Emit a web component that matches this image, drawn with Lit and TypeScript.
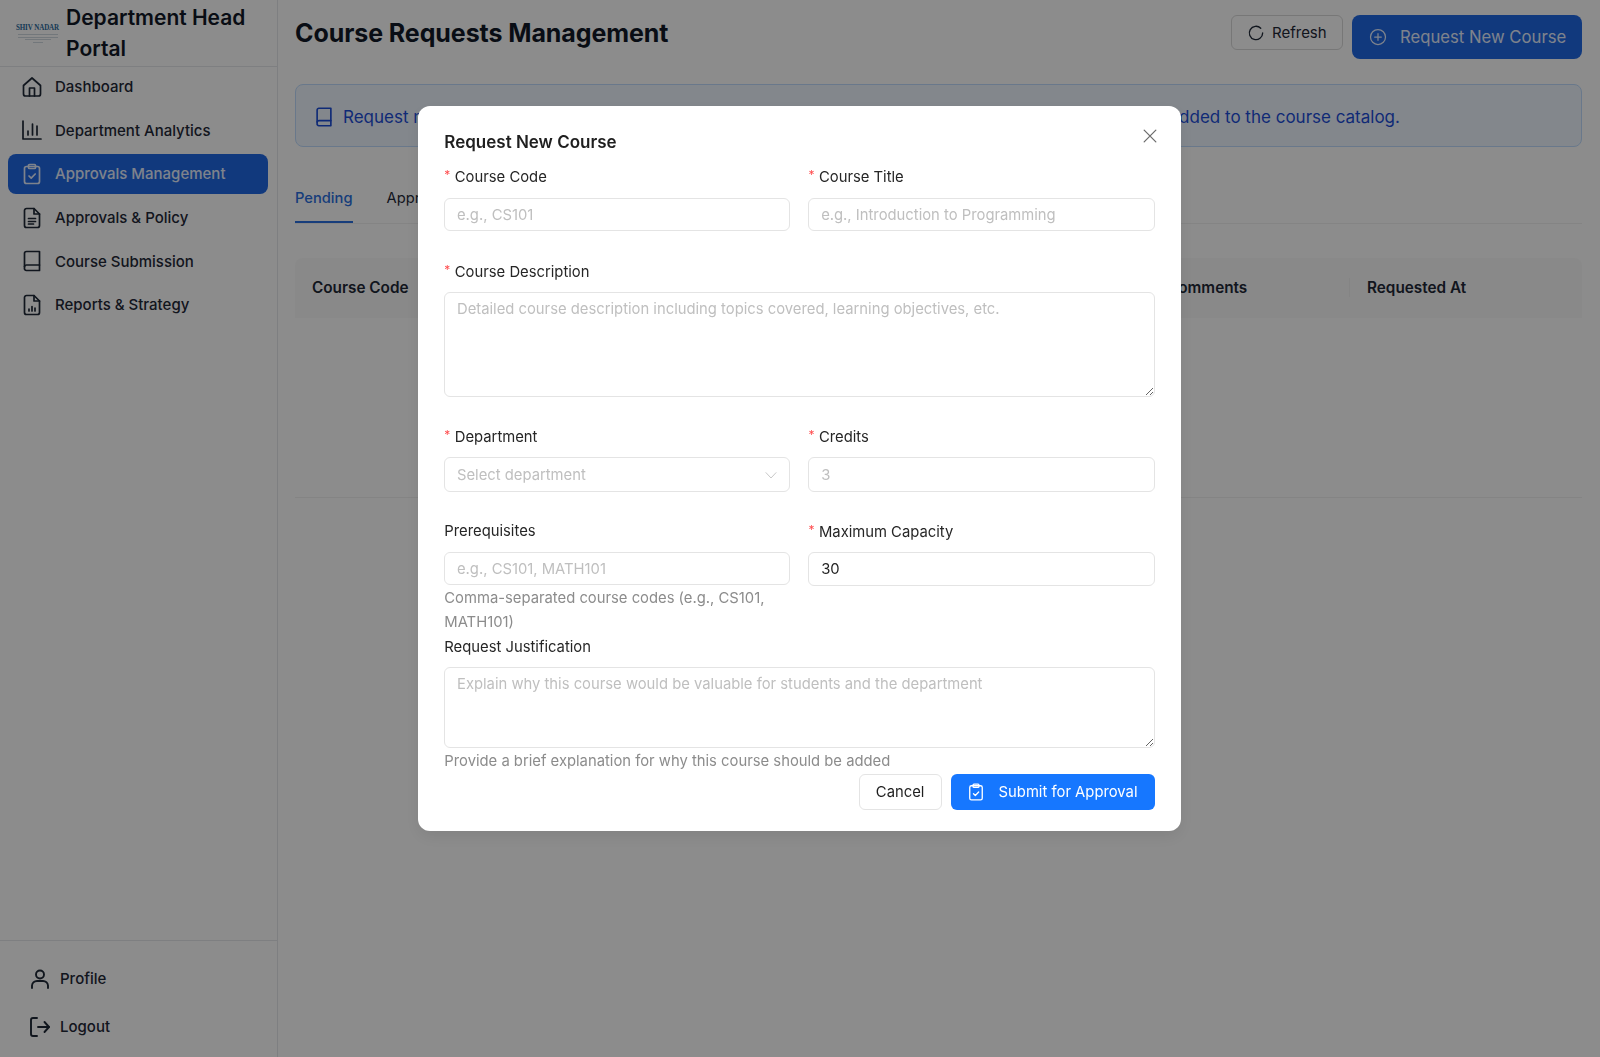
import { LitElement, html, css, svg } from "lit";
import { customElement } from "lit/decorators.js";

const ic = (body: unknown, size = 24, sw = 1.7) => html`<svg class="ic" width=${size} height=${size} viewBox="0 0 24 24" fill="none" stroke="currentColor" stroke-width=${sw} stroke-linecap="round" stroke-linejoin="round">${body}</svg>`;

const home = svg`<path d="M3.5 10.5 12 3l8.5 7.5V19a2 2 0 0 1-2 2h-13a2 2 0 0 1-2-2z"/><path d="M9.5 21v-8h5v8"/>`;
const chart = svg`<path d="M3 3v18h18"/><path d="M8 17v-4"/><path d="M12.5 17V6"/><path d="M17 17V8"/>`;
const clip = svg`<rect x="4.5" y="4.5" width="15" height="17" rx="2"/><rect x="8.5" y="2.5" width="7" height="4" rx="1"/><path d="m9 14 2.2 2.2L15.2 12"/>`;
const doc = svg`<path d="M14 2.5H6.5a2 2 0 0 0-2 2v15a2 2 0 0 0 2 2h11a2 2 0 0 0 2-2V8z"/><path d="M14 2.5V8h5.5"/><path d="M8.5 12.5h7M8.5 15.5h7M8.5 18h5"/>`;
const book = svg`<path d="M4.5 19V4.5a2 2 0 0 1 2-2h13v19h-13a2 2 0 0 1-2-2.5z"/><path d="M4.5 17.5a2 2 0 0 1 2-1.5h13"/>`;
const report = svg`<path d="M14 2.5H6.5a2 2 0 0 0-2 2v15a2 2 0 0 0 2 2h11a2 2 0 0 0 2-2V8z"/><path d="M14 2.5V8h5.5"/><path d="M9 18v-2M12 18v-4.5M15 18v-3"/>`;
const user = svg`<circle cx="12" cy="7.5" r="4"/><path d="M4 21v-2.5A5 5 0 0 1 9 14h6a5 5 0 0 1 5 4.5V21"/>`;
const logout = svg`<path d="M9 3H5a2 2 0 0 0-2 2v14a2 2 0 0 0 2 2h4"/><path d="M10 12h11"/><path d="m16.5 7 4.5 5-4.5 5"/>`;
const refresh = svg`<path d="M20 12a8 8 0 1 1-2.3-5.7"/>`;
const plus = svg`<circle cx="12" cy="12" r="9"/><path d="M12 8v8M8 12h8"/>`;

const NAV = [
  ["Dashboard", home, false],
  ["Department Analytics", chart, false],
  ["Approvals Management", clip, true],
  ["Approvals & Policy", doc, false],
  ["Course Submission", book, false],
  ["Reports & Strategy", report, false],
] as const;

@customElement("app-root")
export class AppRoot extends LitElement {
  static styles = css`
    :host { display: block; font-family: Inter, "Liberation Sans", sans-serif; color: #111827; height: 1057px; overflow: hidden; position: relative; background: #fff; }
    * { box-sizing: border-box; }
    .ic { flex: none; display: block; }
    .layout { display: flex; height: 1057px; }

    .side { width: 278px; flex: none; border-right: 1px solid #e5e7eb; display: flex; flex-direction: column; background: #fff; }
    .brand { height: 67px; flex: none; border-bottom: 1px solid #e5e7eb; display: flex; align-items: center; gap: 8px; padding-left: 17px; }
    .logo { width: 41px; flex: none; display: flex; flex-direction: column; align-items: center; gap: 1.5px; color: #2a6a9c; }
    .logo b { font: 700 7px/9px "Liberation Serif", serif; white-space: nowrap; letter-spacing: -.1px; transform: scaleY(1.25); }
    .logo i { display: block; height: 1px; background: #d0d9e1; width: 40px; }
    .logo i.s { width: 26px; }
    .logo i.t { width: 10px; }
    .brand h1 { margin: 0; font-size: 21px; line-height: 31px; font-weight: 600; color: #111827; }
    nav { display: flex; flex-direction: column; gap: 4px; padding: 0 9px 0 8px; }
    .item { height: 39.6px; display: flex; align-items: center; gap: 11px; padding-left: 12px; border-radius: 8px; font-size: 15px; font-weight: 500; color: #1f2937; }
    .item.on { background: #1f68e4; color: #e6eeff; }
    .foot { margin-top: auto; border-top: 1px solid #e5e7eb; padding: 13.5px 0 6.5px 28px; display: flex; flex-direction: column; }
    .fi { height: 48px; display: flex; align-items: center; gap: 8px; font-size: 15px; font-weight: 500; color: #1f2937; }

    main { flex: 1; min-width: 0; padding: 15px 18px 0 17px; }
    .top { display: flex; align-items: flex-start; gap: 9px; height: 44px; }
    .top h2 { margin: 0 auto 0 0; font-size: 25px; line-height: 36px; font-weight: 700; letter-spacing: -.08px; color: #111827; }
    .btn { border-radius: 6px; display: flex; align-items: center; white-space: nowrap; }
    .refresh { height: 35px; width: 112px; border: 1px solid #d9d9d9; padding-left: 14px; gap: 6px; font-size: 15px; color: #1f2937; }
    .new { height: 44px; width: 230px; background: #1f68e4; color: #e6eeff; border-radius: 8px; padding-left: 16px; gap: 12px; font-size: 16.7px; }
    .alert { margin-top: 25px; height: 63px; border: 1px solid #bfdbfe; background: #eff6ff; border-radius: 8px; display: flex; align-items: center; gap: 8px; padding: 2px 0 0 17px; color: #1d4ed8; font-size: 17px; white-space: nowrap; }
    .tabs { margin-top: 23px; height: 54px; border-bottom: 1px solid #f0f0f0; display: flex; gap: 34px; font-size: 14.7px; color: #1f2937; }
    .tab { height: 53px; line-height: 57px; }
    .tab.on { color: #2a6fe0; border-bottom: 2px solid #2a6fe0; font-weight: 500; }
    .thead { margin-top: 34px; height: 60px; padding-bottom: 1px; background: #fafafa; border-radius: 8px 8px 0 0; display: grid; grid-template-columns: 855px 199px 1fr; align-items: center; font-size: 15.3px; font-weight: 600; color: #1f2937; }
    .thead div { padding-left: 17px; }
    .thead div.r { border-left: 1px solid #f0f0f0; }
    .tbody { height: 180px; border-bottom: 1px solid #f0f0f0; }

    .overlay { position: fixed; inset: 0; background: rgba(0, 0, 0, .45); }
    .modal { position: absolute; left: 418px; top: 106px; width: 763px; height: 725px; background: #fff; border-radius: 12px; padding: 0 26.4px 0 26.3px; box-shadow: 0 6px 16px rgba(0,0,0,.08); }
    .close { position: absolute; right: 21px; top: 20px; color: #6b6b6b; }
    .mtitle { margin: 0; height: 59px; padding-top: 23px; font-size: 17px; line-height: 26px; font-weight: 600; color: #1f1f1f; }
    .two { display: grid; grid-template-columns: 1fr 1fr; gap: 18px; align-items: start; }
    .lab { height: 24px; line-height: 24px; font-size: 14.8px; color: #262626; white-space: nowrap; }
    .req { display: inline-block; width: 10.5px; color: #ff4d4f; font-size: 12px; vertical-align: 3px; line-height: 1; }
    input, textarea, .sel { display: block; width: 100%; margin-top: 9px; border: 1px solid #e4e4e4; border-radius: 6px; background: #fff; font: 14.8px Inter, sans-serif; color: #1f1f1f; padding: 0 11.7px; outline: none; }
    input::placeholder, textarea::placeholder { color: #bfbfbf; opacity: 1; }
    input { height: 33px; }
    textarea { padding-top: 6px; line-height: 20px; resize: vertical; }
    .t1 { height: 105px; margin-top: 8px; }
    .t2 { height: 81px; margin-top: 8px; }
    .sel { height: 35px; margin-top: 8px; display: flex; align-items: center; justify-content: space-between; color: #bfbfbf; padding-right: 10px; }
    input.tall { height: 35px; margin-top: 8px; }
    input.cap { height: 34px; margin-top: 8px; }
    .hint { font-size: 14.8px; line-height: 23.5px; color: #8c8c8c; margin-top: 2px; }
    .r1 { margin-top: 0; }
    .r2 { margin-top: 29px; }
    .r3 { margin-top: 28px; }
    .r4 { margin-top: 27px; }
    .just { margin-top: 1px; }
    .mc { padding-top: 1px; }
    .actions { display: flex; justify-content: flex-end; gap: 9px; margin-top: 0; }
    .cancel, .submit { height: 36px; border-radius: 6px; font-size: 14.8px; display: flex; align-items: center; }
    .cancel { width: 83px; justify-content: center; border: 1px solid #e4e4e4; color: #1f1f1f; }
    .submit { width: 204px; background: #1677ff; color: #fff; padding-left: 15px; gap: 13px; }
  `;

  private label(t: string, req = true) {
    return html`<div class="lab">${req ? html`<span class="req">*</span>` : ""}${t}</div>`;
  }

  render() {
    return html`
      <div class="layout">
        <aside class="side">
          <div class="brand">
            <div class="logo"><b>SHIV NADAR</b><i></i><i></i><i class="s"></i><i class="t"></i></div>
            <h1>Department Head Portal</h1>
          </div>
          <nav>
            ${NAV.map(([t, i, on]) => html`<div class="item ${on ? "on" : ""}">${ic(i)}<span>${t}</span></div>`)}
          </nav>
          <div class="foot">
            <div class="fi">${ic(user, 24, 1.9)}<span>Profile</span></div>
            <div class="fi">${ic(logout, 24, 1.9)}<span>Logout</span></div>
          </div>
        </aside>
        <main>
          <div class="top">
            <h2>Course Requests Management</h2>
            <div class="btn refresh">${ic(refresh, 20, 1.6)}<span>Refresh</span></div>
            <div class="btn new">${ic(plus, 20, 1.5)}<span>Request New Course</span></div>
          </div>
          <div class="alert">${ic(book, 22, 1.8)}<span>Request new courses for your departments. Once approved by the administration, new courses will be added to the course catalog.</span></div>
          <div class="tabs"><div class="tab on">Pending</div><div class="tab">Approved</div><div class="tab">Rejected</div></div>
          <div class="thead"><div>Course Code</div><div>Comments</div><div class="r">Requested At</div></div>
          <div class="tbody"></div>
        </main>
      </div>
      <div class="overlay">
        <div class="modal">
          <div class="close">${ic(svg`<path d="M5 5l14 14M19 5 5 19"/>`, 20, 1.5)}</div>
          <h3 class="mtitle">Request New Course</h3>
          <div class="two r1">
            <div>${this.label("Course Code")}<input placeholder="e.g., CS101" /></div>
            <div>${this.label("Course Title")}<input placeholder="e.g., Introduction to Programming" /></div>
          </div>
          <div class="r2">${this.label("Course Description")}
            <textarea class="t1" placeholder="Detailed course description including topics covered, learning objectives, etc."></textarea>
          </div>
          <div class="two r3">
            <div>${this.label("Department")}<div class="sel"><span>Select department</span>${ic(svg`<path d="m4.5 8.5 7.5 8 7.5-8"/>`, 16, 1.3)}</div></div>
            <div>${this.label("Credits")}<input class="tall" placeholder="3" /></div>
          </div>
          <div class="two r4">
            <div>${this.label("Prerequisites", false)}<input placeholder="e.g., CS101, MATH101" />
              <div class="hint">Comma-separated course codes (e.g., CS101, MATH101)</div></div>
            <div class="mc">${this.label("Maximum Capacity")}<input class="cap" .value=${"30"} /></div>
          </div>
          <div class="just">${this.label("Request Justification", false)}
            <textarea class="t2" placeholder="Explain why this course would be valuable for students and the department"></textarea>
            <div class="hint">Provide a brief explanation for why this course should be added</div>
          </div>
          <div class="actions">
            <div class="cancel">Cancel</div>
            <div class="submit">${ic(clip, 20, 1.6)}<span>Submit for Approval</span></div>
          </div>
        </div>
      </div>
    `;
  }
}
